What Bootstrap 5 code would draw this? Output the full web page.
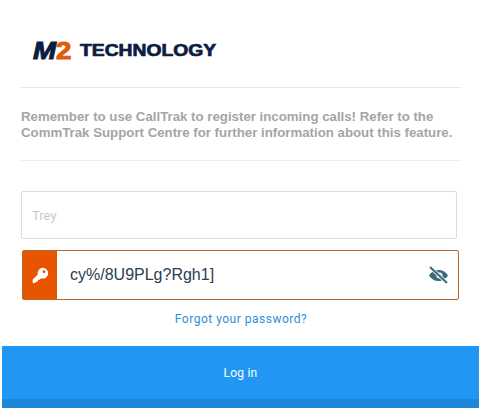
<!DOCTYPE html>
<html lang="en">
<head>
  <meta charset="UTF-8">
  <meta name="viewport" content="width=device-width, initial-scale=1.0">
  <title>Login - CommTrak</title>
  <link href="https://cdn.jsdelivr.net/npm/bootstrap@5.3.1/dist/css/bootstrap.min.css" rel="stylesheet">
  <style>
    html, body { height: 408px; overflow: hidden; }
    body { background: #fff; font-family: "Roboto", sans-serif; }

    /* Top part of the card */
    .login-top { padding: 0 21px; width: 482px; }
    .logo-row { height: 88px; padding: 13px 0 0 12px; border-bottom: 1px solid #e6e6e6; }
    .logo-mark { font-family: "Liberation Sans", sans-serif; font-weight: 700; font-style: italic; font-size: 24px; line-height: 27px; color: #0c1c42; -webkit-text-stroke: 1px #0c1c42; display: inline-block; width: 40px; transform: scaleX(1.15); transform-origin: left center; white-space: nowrap; }
    .logo-two { font-style: normal; color: #e45a0c; -webkit-text-stroke: 1px #e45a0c; }
    .logo-name { font-family: "Liberation Sans", sans-serif; font-weight: 700; font-size: 16.5px; line-height: 27px; color: #0c1c42; margin-left: 7px; -webkit-text-stroke: .7px #0c1c42; display: inline-block; transform: scaleX(1.17); transform-origin: left center; }
    .notice-text { font-family: "Liberation Sans", sans-serif; font-weight: 700; font-size: 13.25px; line-height: 16px; color: #a5a5a5; height: 73px; padding-top: 21px; margin: 0; border-bottom: 1px solid #eeeeee; }

    /* Fields */
    .user-field { width: 436px; height: 48px; margin: 30px 0 0 21px; border: 1px solid #dcdcdc; border-radius: 2px; padding: 0 10px; font-size: 13px; color: #333; }
    .user-field::placeholder { color: #c9c9c9; }
    .pass-group { width: 437px; height: 50px; margin: 11px 0 0 22px; border: 1px solid #b8672a; border-radius: 2px; }
    .key-box { width: 34px; background: #e85500; }
    .pass-field { font-family: "Liberation Sans", sans-serif; font-size: 16px; color: #2b3d52; border: 0; outline: 0; padding: 0 0 0 13px; min-width: 0; background: transparent; }
    .eye-box { width: 38px; padding-left: 8px; }

    .forgot-link { color: #2f8fd8; font-size: 12px; line-height: 16px; margin-top: 11px; text-decoration: none; letter-spacing: .5px; width: 482px; }

    /* Log in bar */
    .login-btn { width: 477px; margin: 19px 0 0 2px; height: 62px; padding: 0; background: #2196f3; border: 0; border-bottom: 9px solid #1e88d8; border-radius: 0; color: #fff; font-size: 12px; letter-spacing: .2px; }
  </style>
</head>
<body>

  <div class="login-top">
    <div class="logo-row d-flex align-items-center">
      <span class="logo-mark">M<span class="logo-two">2</span></span>
      <span class="logo-name">TECHNOLOGY</span>
    </div>
    <p class="notice-text">Remember to use CallTrak to register incoming calls! Refer to the CommTrak Support Centre for further information about this feature.</p>
  </div>

  <form>
    <input class="user-field d-block" type="text" placeholder="Trey">

    <div class="pass-group d-flex">
      <div class="key-box d-flex align-items-center justify-content-center">
        <svg width="17" height="17" viewBox="0 0 16 16" fill="#fff">
          <path d="M10.2 .8a5 5 0 0 1 0 10 5 5 0 0 1-1.7-.3L7.2 12H5.6v1.600H4L3 15H.6v-3L5.400 7a5 5 0 0 1 4.800-6.200z"/>
          <circle cx="11.300" cy="4.400" r="1.300" fill="#e85500"/>
        </svg>
      </div>
      <input class="pass-field flex-grow-1" type="text" value="cy%/8U9PLg?Rgh1]">
      <div class="eye-box d-flex align-items-center">
        <svg width="21" height="18" viewBox="0 0 21 18">
          <path d="M1 9.500C3 6 6.500 4 10.500 4S18 6 20 9.500C18 13 14.500 15 10.500 15S3 13 1 9.500z" fill="#3b6a7c"/>
          <circle cx="11.500" cy="9.500" r="3" fill="#fff"/>
          <circle cx="11.500" cy="9.800" r="1.800" fill="#3b6a7c"/>
          <path d="M2 1l17 16" stroke="#fff" stroke-width="3.500"/>
          <path d="M2 1l17 16" stroke="#3b6a7c" stroke-width="2"/>
        </svg>
      </div>
    </div>

    <a class="forgot-link d-block text-center" href="#">Forgot your password?</a>

    <button class="login-btn d-block" type="button">Log in</button>
  </form>

  <script src="https://cdn.jsdelivr.net/npm/bootstrap@5.3.1/dist/js/bootstrap.bundle.min.js"></script>
</body>
</html>
